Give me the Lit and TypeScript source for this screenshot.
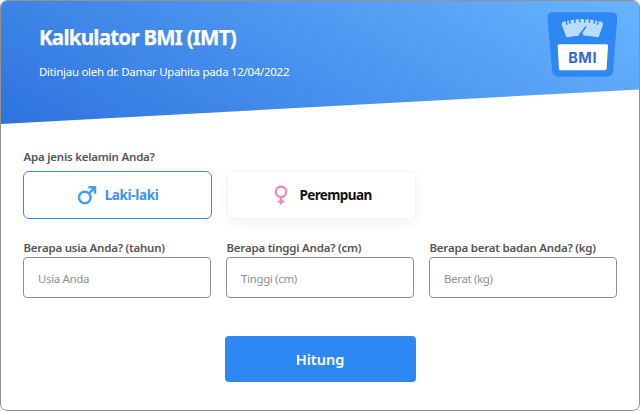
import { LitElement, html, css } from "lit";
import { customElement } from "lit/decorators.js";

const fields = [
  { label: "Berapa usia Anda? (tahun)", hint: "Usia Anda", kind: "age" },
  { label: "Berapa tinggi Anda? (cm)", hint: "Tinggi (cm)", kind: "height" },
  { label: "Berapa berat badan Anda? (kg)", hint: "Berat (kg)", kind: "weight" },
];

@customElement("bmi-scale-icon")
class BmiScaleIcon extends LitElement {
  static styles = css`
    :host { display: block; width: 72px; height: 67px; }
    svg { display: block; }
    text { font: 700 14.500px Inter, sans-serif; fill: #3468d4; }
  `;
  render() {
    return html`<svg width="72" height="67" viewBox="0 0 72 67">
      <path d="M6.500 1.300H66Q71.300 1.300 71.200 7L67.300 59Q66.800 65.700 61 65.700H12Q6.500 65.700 6 59L1.500 7Q1.200 1.300 6.500 1.300Z" fill="#2e88f3"/>
      <path d="M15.600 13.500Q15.600 11.500 17.500 10.800Q36.500 5.400 55.500 10.800Q57.200 11.500 57 13.500L53 25.300Q52.500 26.500 51.200 26.200Q36.500 22.800 21.800 26.200Q20.500 26.500 20 25.300Z" fill="#badcff"/>
      <path d="M19.500 8.500L21.200 13.800M24 7V12.800M28.800 6V12M33.700 6V11.500M38.700 6V11.500M43.500 6V12M48.300 7V12.800M52.800 8.500L51.300 13.800" stroke="#2e88f3" stroke-width="1.500"/>
      <path d="M39.600 16.200L34.800 22.500" stroke="#2e88f3" stroke-width="1.700" stroke-linecap="round"/>
      <circle cx="35" cy="24" r="2.300" fill="#2e88f3"/>
      <path d="M13.200 33.200H60.500Q62 33.200 62 34.700L60.700 57.500Q60.500 59.200 58.700 59.200H14.500Q13 59.200 12.900 57.700L11.700 34.700Q11.700 33.200 13.200 33.200Z" fill="#fff"/>
      <text x="22.200" y="52" textLength="28.300">BMI</text>
    </svg>`;
  }
}

@customElement("app-root")
class AppRoot extends LitElement {
  static styles = css`
    :host { display: block; font-family: "Noto Sans", "Open Sans", sans-serif; }
    * { box-sizing: border-box; }
    .card { height: 411px; border: 1px solid #929292; border-radius: 7px; background: #fff; overflow: hidden; }
    .hero { height: 123px; padding: 10px 21px 0 38px; display: flex; justify-content: space-between; color: #fff;
      background: linear-gradient(30deg, #2e73de 0%, #65b1fe 95%);
      clip-path: polygon(0 0, 100% 0, 100% 88.500px, 0 100%); }
    h1 { margin: 10.500px 0 0; font-size: 20.500px; line-height: 30px; font-weight: 700; letter-spacing: -.75px; white-space: nowrap; -webkit-text-stroke: .25px #fff; }
    .review { margin: 12.500px 0 0; font-size: 11.500px; line-height: 16px; letter-spacing: -.3px; white-space: nowrap; }
    .form { padding: 26px 22px 0 22px; }
    .label { display: block; height: 15px; font-size: 11.500px; line-height: 15px; font-weight: 600; color: #555; letter-spacing: -.22px; white-space: nowrap; padding-left: .5px; }
    .choices { display: flex; gap: 15px; margin-top: 6px; }
    .choice { height: 48px; width: 189px; display: flex; align-items: center; justify-content: center; border-radius: 6px;
      font: 700 13.500px/20px "Noto Sans", sans-serif; background: #fff; padding: 0 0 1px; white-space: nowrap; }
    .gender { line-height: 13px; }
    .male { border: 1px solid #388bf2; color: #3c91f8; gap: 8px; letter-spacing: -.35px; }
    .female { border: 1px solid #f1f3f6; color: #111; gap: 11px; letter-spacing: -.6px; padding-left: 3px; box-shadow: 0 4px 12px rgba(40, 60, 90, .06); }
    .fields { display: flex; gap: 15px; margin-top: 21px; }
    .field { width: 188px; }
    .field .label { margin-bottom: 2px; }
    input { display: block; width: 188px; height: 41px; border: 1px solid #929292; border-radius: 4px; padding: 2px 14px 0; background: #fff;
      font: 11.500px "Noto Sans", sans-serif; letter-spacing: -.35px; outline: none; }
    input::placeholder { color: #919191; opacity: 1; }
    .submit { display: block; width: 191px; height: 46px; margin: 38px auto 0; border: 0; border-radius: 4px; background: #2e88f3; color: #fff;
      font: 600 14.500px "Noto Sans", sans-serif; padding: 0 0 1px; }
  `;
  render() {
    return html`<main class="card">
      <header class="hero">
        <div>
          <h1>Kalkulator BMI (IMT)</h1>
          <p class="review">Ditinjau oleh dr. Damar Upahita pada 12/04/2022</p>
        </div>
        <bmi-scale-icon></bmi-scale-icon>
      </header>
      <section class="form">
        <span class="label gender">Apa jenis kelamin Anda?</span>
        <div class="choices">
          <button class="choice male">
            <svg width="20" height="20" viewBox="0 0 20 20" fill="none" stroke="#46a0fb" stroke-width="2.500">
              <circle cx="7.800" cy="12.500" r="5.800"/><path d="M12 8.300L16.500 3.800M11.500 2.300H18V8.800" />
              <path d="M13.500 2H18.300V6.800Z" fill="#46a0fb" stroke="none"/>
            </svg>
            <span>Laki-laki</span>
          </button>
          <button class="choice female">
            <svg width="14" height="20" viewBox="0 0 14 20" fill="none" stroke="#fd83b3" stroke-width="2.200">
              <circle cx="7" cy="6.800" r="5.200"/><path d="M7 12V19.500M3.600 16.500H10.400"/>
            </svg>
            <span>Perempuan</span>
          </button>
        </div>
        <div class="fields">
          ${fields.map((f) => html`<label class="field ${f.kind}">
            <span class="label">${f.label}</span><input placeholder=${f.hint} />
          </label>`)}
        </div>
        <button class="submit">Hitung</button>
      </section>
    </main>`;
  }
}
